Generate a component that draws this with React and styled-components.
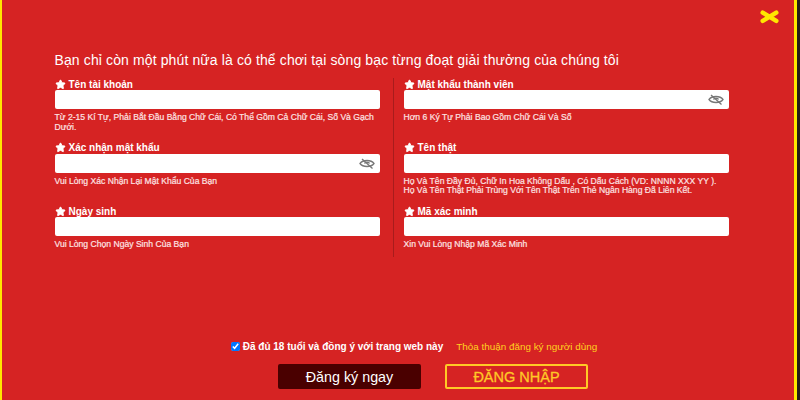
import React from "react"
import styled, { createGlobalStyle } from "styled-components"
import { Star } from "lucide-react"

const GlobalStyle = createGlobalStyle`
  html, body {
    margin: 0;
    padding: 0;
    background: #241c18;
  }
  body {
    font-family: "Liberation Sans", Arial, sans-serif;
  }
`

const leftFields = [
  {
    label: "Tên tài khoản",
    hint: "Từ 2-15 Kí Tự, Phải Bắt Đầu Bằng Chữ Cái, Có Thể Gồm Cả Chữ Cái, Số Và Gạch Dưới.",
  },
  { label: "Xác nhận mật khẩu", hint: "Vui Lòng Xác Nhận Lại Mật Khẩu Của Bạn", secret: true },
  { label: "Ngày sinh", hint: "Vui Lòng Chọn Ngày Sinh Của Bạn" },
]

const rightFields = [
  { label: "Mật khẩu thành viên", hint: "Hơn 6 Ký Tự Phải Bao Gồm Chữ Cái Và Số", secret: true },
  {
    label: "Tên thật",
    hint: "Họ Và Tên Đầy Đủ, Chữ In Hoa Không Dấu , Có Dấu Cách (VD: NNNN XXX YY ).\nHọ Và Tên Thật Phải Trùng Với Tên Thật Trên Thẻ Ngân Hàng Đã Liên Kết.",
  },
  { label: "Mã xác minh", hint: "Xin Vui Lòng Nhập Mã Xác Minh" },
]

const FieldBlock = ({ label, hint, secret }) => (
  <Field>
    <Label>
      <Star size={11} fill="#fff" strokeWidth={2} />
      {label}
    </Label>
    <InputWrap>
      <Input type={secret ? "password" : "text"} />
      {secret && (
        <EyeIcon viewBox="0 0 16 11">
          <path d="M1 5.5 C4 1.5 12 1.5 15 5.5 C12 9.5 4 9.5 1 5.5 Z" />
          <path d="M3 1 L13.5 10.5" />
          <path d="M5.5 5.5 C6 3.8 10 3.8 10.5 5.5" />
        </EyeIcon>
      )}
    </InputWrap>
    <Hint>{hint}</Hint>
  </Field>
)

export default function App() {
  return (
    <>
      <GlobalStyle />
      <Modal>
        <CloseRow>
          <CloseIcon viewBox="0 0 18 13">
            <path d="M2.5 2.5 L15.5 10.5 M15.5 2.5 L2.5 10.5" />
          </CloseIcon>
        </CloseRow>
        <Title>Bạn chỉ còn một phút nữa là có thể chơi tại sòng bạc từng đoạt giải thưởng của chúng tôi</Title>
        <Columns>
          <Column>
            {leftFields.map((f) => (
              <FieldBlock key={f.label} {...f} />
            ))}
          </Column>
          <Column $right>
            {rightFields.map((f) => (
              <FieldBlock key={f.label} {...f} />
            ))}
          </Column>
        </Columns>
        <Agree>
          <Check type="checkbox" defaultChecked />
          <AgreeText>Đã đủ 18 tuổi và đồng ý với trang web này</AgreeText>
          <Terms>Thỏa thuận đăng ký người dùng</Terms>
        </Agree>
        <Actions>
          <RegisterButton>Đăng ký ngay</RegisterButton>
          <LoginButton>ĐĂNG NHẬP</LoginButton>
        </Actions>
      </Modal>
    </>
  )
}

const Modal = styled.div`
  box-sizing: border-box;
  width: 797px;
  height: 400px;
  background: #d62323;
  border-left: 2.5px solid #ffe600;
  border-right: 3.5px solid #ffe600;
  padding: 0 52.5px;
  color: #fff;
  overflow: hidden;
`

const CloseRow = styled.div`
  display: flex;
  justify-content: flex-end;
  height: 52px;
  padding: 10px 0 0;
  box-sizing: border-box;
  margin-right: -37.5px;
`

const CloseIcon = styled.svg`
  width: 19px;
  height: 13.5px;
  fill: none;
  stroke: #ffe600;
  stroke-width: 4.4;
  stroke-linecap: round;
`

const Title = styled.div`
  font-size: 14px;
  line-height: 16px;
  color: #fff;
  white-space: nowrap;
  letter-spacing: 0.12px;
`

const Columns = styled.div`
  display: flex;
  margin-top: 10px;
  height: 179px;
`

const Column = styled.div`
  width: ${(p) => (p.$right ? "335px" : "339px")};
  box-sizing: border-box;
  padding-right: ${(p) => (p.$right ? "0" : "13px")};
  padding-left: ${(p) => (p.$right ? "10px" : "0")};
  border-right: ${(p) => (p.$right ? "none" : "1px solid #a81c1c")};
  display: flex;
  flex-direction: column;
`

const Field = styled.div`
  flex: none;
  height: 63.6px;
`

const Label = styled.div`
  display: flex;
  align-items: center;
  gap: 3px;
  height: 12px;
  font-size: 10px;
  font-weight: 700;
  color: #fff;
`

const InputWrap = styled.div`
  position: relative;
  height: 19px;
`

const Input = styled.input`
  box-sizing: border-box;
  display: block;
  width: 100%;
  height: 100%;
  border: none;
  outline: none;
  border-radius: 2px;
  background: #fff;
`

const EyeIcon = styled.svg`
  position: absolute;
  right: 5px;
  top: 4px;
  width: 16px;
  height: 11px;
  fill: none;
  stroke: #777;
  stroke-width: 1.3;
`

const Hint = styled.div`
  margin-top: 4px;
  font-size: 8.6px;
  line-height: 9.5px;
  color: #fde3e3;
  white-space: pre-line;
  -webkit-text-stroke: 0.2px #fde3e3;
`

const Agree = styled.div`
  display: flex;
  align-items: center;
  justify-content: center;
  margin-top: 82px;
  height: 14px;
  padding-left: 32px;
`

const Check = styled.input`
  width: 9px;
  height: 9px;
  margin: 0 3px 0 0;
`

const AgreeText = styled.span`
  font-size: 10px;
  font-weight: 700;
  color: #fff;
  margin-right: 13px;
`

const Terms = styled.span`
  font-size: 9.9px;
  color: #ffd21f;
`

const Actions = styled.div`
  display: flex;
  justify-content: center;
  gap: 24px;
  margin-top: 11px;
  padding-left: 70px;
`

const RegisterButton = styled.button`
  width: 143px;
  height: 25px;
  padding: 0;
  border: none;
  border-radius: 2px;
  background: #4a0000;
  color: #fff;
  font-family: inherit;
  font-size: 14.3px;
`

const LoginButton = styled.button`
  box-sizing: border-box;
  width: 143px;
  height: 25px;
  padding: 0;
  border: 2px solid #ffc926;
  border-radius: 2px;
  background: transparent;
  color: #ffc926;
  font-family: inherit;
  font-size: 14.5px;
  -webkit-text-stroke: 0.3px #ffc926;
`
